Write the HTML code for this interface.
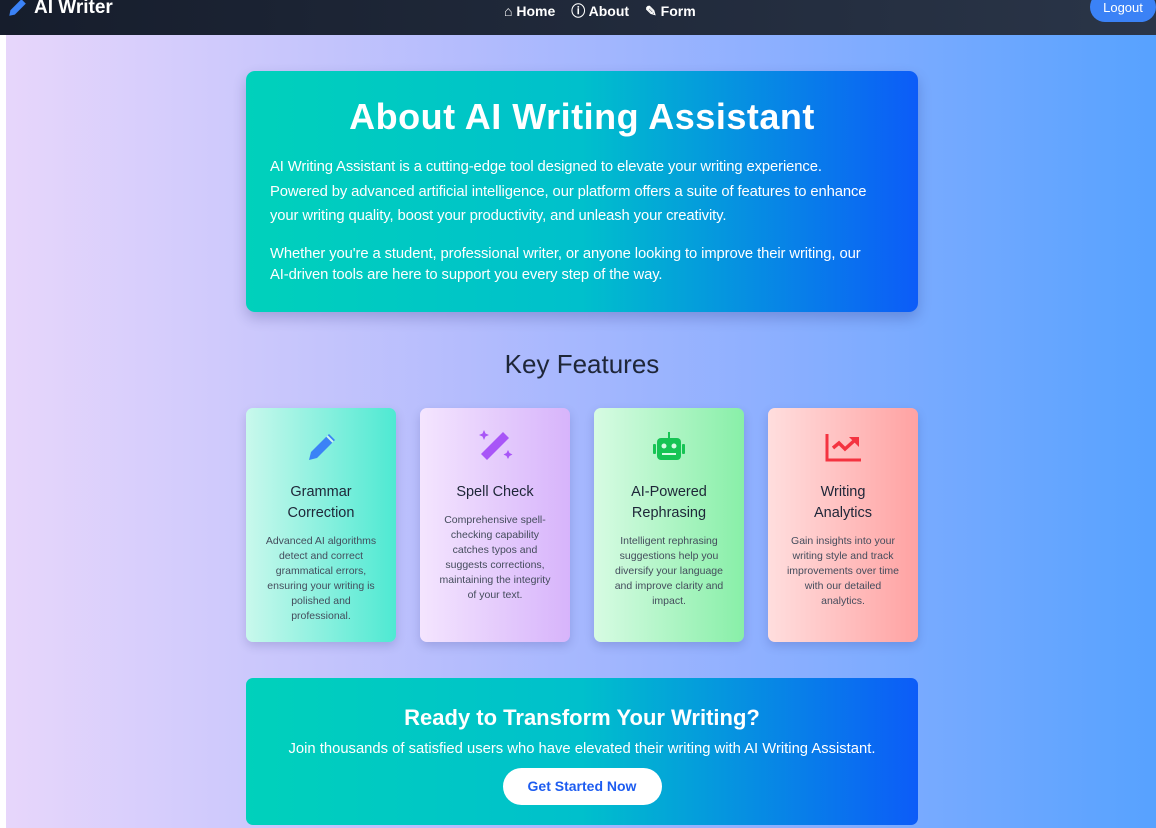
<!DOCTYPE html>
<html><head><style>
*{box-sizing:border-box;margin:0;padding:0}
body{width:1156px;height:828px;overflow:hidden;font-family:"Liberation Sans",sans-serif;background:#fff;position:relative}
.nav{position:absolute;left:0;top:0;width:1156px;height:35px;background:linear-gradient(90deg,#161d2c,#2a3548);color:#fff}
.brand{position:absolute;left:6px;top:-3px;font-size:19px;font-weight:bold;display:flex;align-items:center;gap:6px}
.links{position:absolute;left:504px;top:1px;font-size:14px;font-weight:bold;display:flex;gap:16px}
.links span{display:flex;align-items:center;gap:4px}
.logout{position:absolute;left:1090px;top:-8px;width:66px;height:30px;background:#3b82f6;border-radius:15px;color:#fff;font-size:13px;text-align:center;line-height:32px}
.main{position:absolute;left:6px;top:35px;width:1150px;height:793px;background:linear-gradient(90deg,#e7d6fb,#b4bcfd 40%,#8fb0ff 65%,#57a2ff)}
.hero{position:absolute;left:246px;top:71px;width:672px;height:241px;border-radius:9px;background:linear-gradient(90deg,#00d1bb,#00c0cc 50%,#0c5cf8);box-shadow:0 6px 14px rgba(0,0,80,.2);color:#fff;padding:0 24px}
.hero h1{text-align:center;font-size:36px;margin-top:25px;margin-bottom:17px;letter-spacing:.5px}
.hero p{font-size:14.8px;line-height:24.5px;margin-bottom:15px;font-weight:300;letter-spacing:-.1px;white-space:nowrap}
h2{position:absolute;left:246px;width:672px;top:349px;text-align:center;font-size:26px;font-weight:normal;color:#1e2638}
.card{position:absolute;top:408px;width:150px;height:234px;border-radius:7px;text-align:center;box-shadow:0 4px 10px rgba(0,0,80,.15);padding-top:20px}
.card svg{display:block;margin:0 auto}
.card h3{font-size:14.5px;font-weight:normal;color:#1e2638;line-height:21px;margin-top:14px;padding:0 28px}
.card p{font-size:10.5px;color:#444c5c;line-height:15px;margin-top:10px;padding:0 16px}
.cta{position:absolute;left:246px;top:678px;width:672px;height:147px;border-radius:7px;background:linear-gradient(90deg,#00d1bb,#00c0cc 50%,#0c5cf8);color:#fff;text-align:center}
.cta h3{font-size:22px;margin-top:27px}
.cta p{font-size:14.8px;margin-top:10px;font-weight:300}
.btn{display:inline-block;margin-top:11px;width:159px;height:37px;border-radius:19px;background:#fff;color:#1d5cf0;font-weight:bold;font-size:14px;line-height:37px}
</style></head><body>
<div class="nav">
<div class="brand"><svg width="22" height="22" viewBox="0 0 20 20"><path d="M14 2l4 4-10 10-5 1 1-5z" fill="#3b82f6"/></svg>AI Writer</div>
<div class="links"><span>⌂ Home</span><span>ⓘ About</span><span>✎ Form</span></div>
<div class="logout">Logout</div>
</div>
<div class="main"></div>
<div class="hero"><h1>About AI Writing Assistant</h1>
<p>AI Writing Assistant is a cutting-edge tool designed to elevate your writing experience.<br>Powered by advanced artificial intelligence, our platform offers a suite of features to enhance<br>your writing quality, boost your productivity, and unleash your creativity.</p>
<p style="line-height:21px">Whether you're a student, professional writer, or anyone looking to improve their writing, our<br>AI-driven tools are here to support you every step of the way.</p></div>
<h2>Key Features</h2>
<div class="card" style="left:246px;background:linear-gradient(90deg,#c9f8ec,#4ee9d2)"><svg width="40" height="40" viewBox="0 0 40 40"><path d="M28 6l6 6-18 18-8 2 2-8z" fill="#3b82f6"/><path d="M26 8l6 6" stroke="#c9f8ec" stroke-width="2"/></svg><h3>Grammar Correction</h3><p>Advanced AI algorithms detect and correct grammatical errors, ensuring your writing is polished and professional.</p></div>
<div class="card" style="left:420px;background:linear-gradient(90deg,#f4e5fe,#d7b4fb)"><svg width="40" height="40" viewBox="0 0 40 40"><path d="M28 4l6 6-22 22-6-6z" fill="#a855f7"/><path d="M9 2l1.5 3.5 3.5 1.5-3.5 1.5L9 12 7.5 8.5 4 7l3.5-1.5zM33 22l1.5 3 3 1.5-3 1.5-1.5 3-1.5-3-3-1.5 3-1.5z" fill="#a855f7"/></svg><h3>Spell Check</h3><p>Comprehensive spell-checking capability catches typos and suggests corrections, maintaining the integrity of your text.</p></div>
<div class="card" style="left:594px;background:linear-gradient(90deg,#d7fbe3,#88efa8)"><svg width="40" height="40" viewBox="0 0 40 40"><rect x="8" y="10" width="24" height="22" rx="4" fill="#16c454"/><rect x="19" y="4" width="2" height="6" fill="#16c454"/><rect x="4" y="16" width="3" height="10" rx="1" fill="#16c454"/><rect x="33" y="16" width="3" height="10" rx="1" fill="#16c454"/><circle cx="15" cy="18" r="2.5" fill="#d7fbe3"/><circle cx="25" cy="18" r="2.5" fill="#d7fbe3"/><rect x="13" y="25" width="14" height="2" fill="#d7fbe3"/></svg><h3>AI-Powered Rephrasing</h3><p>Intelligent rephrasing suggestions help you diversify your language and improve clarity and impact.</p></div>
<div class="card" style="left:768px;background:linear-gradient(90deg,#ffdede,#ffa2a2)"><svg width="40" height="40" viewBox="0 0 40 40"><path d="M4 6v26h34" stroke="#f43340" stroke-width="3" fill="none"/><path d="M10 20l6-5 6 6 10-9" stroke="#f43340" stroke-width="3.5" fill="none"/><path d="M26 9h10v10z" fill="#f43340"/></svg><h3>Writing Analytics</h3><p>Gain insights into your writing style and track improvements over time with our detailed analytics.</p></div>
<div class="cta"><h3>Ready to Transform Your Writing?</h3><p>Join thousands of satisfied users who have elevated their writing with AI Writing Assistant.</p><div class="btn">Get Started Now</div></div>
</body></html>
